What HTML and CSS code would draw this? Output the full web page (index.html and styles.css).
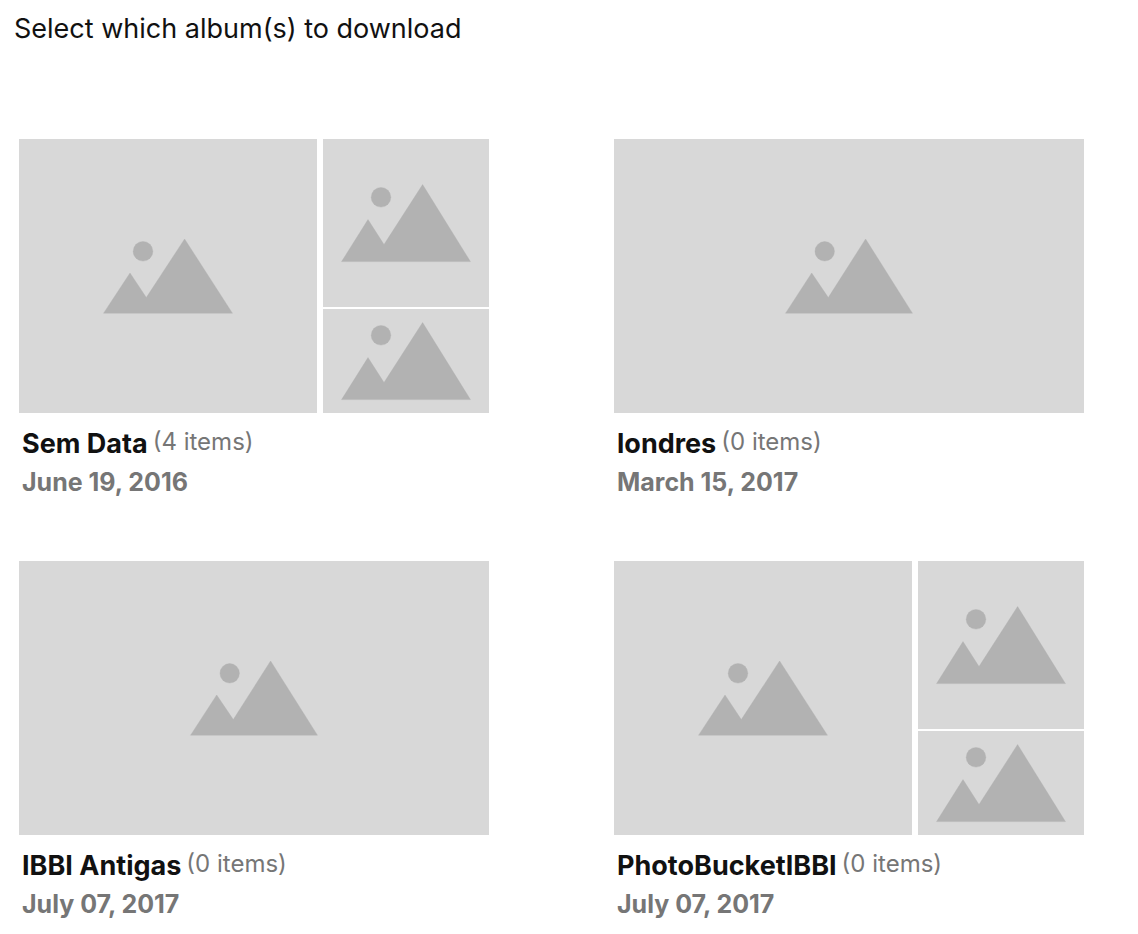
FILE: index.html
```html
<!DOCTYPE html>
<html lang="en">
<head>
  <meta charset="UTF-8">
  <meta name="viewport" content="width=device-width, initial-scale=1.0">
  <title>Download albums</title>
  <link rel="stylesheet" href="styles.css">
</head>
<body>
  <svg class="symbols" aria-hidden="true">
    <symbol id="photo" viewBox="0 0 130 80">
      <circle cx="40" cy="14.3" r="9.8"/>
      <path d="M0.6 78.6L27 36.6L43 61.6L81.6 1.6L129.4 78.6Z"/>
    </symbol>
    <symbol id="photo-large" viewBox="0 0 130 76">
      <circle cx="40" cy="13.3" r="9.8"/>
      <path d="M0.6 75.2L27 35L43.3 59.6L81.6 1L129.4 75.2Z"/>
    </symbol>
    <symbol id="photo-wide" viewBox="0 0 128 76">
      <circle cx="39.7" cy="13.3" r="9.7"/>
      <path d="M0.6 75.2L26.7 35L43.3 59.6L80.6 1L127.4 75.2Z"/>
    </symbol>
  </svg>

  <h1>Select which album(s) to download</h1>

  <main class="albums">
    <article class="album">
      <div class="cover split">
        <div class="thumb large"><svg><use href="#photo-large"/></svg></div>
        <div class="thumb"><svg><use href="#photo"/></svg></div>
        <div class="thumb"><svg><use href="#photo"/></svg></div>
      </div>
      <div class="caption">
        <h2>Sem Data</h2>
        <span>(4 items)</span>
      </div>
      <p>June 19, 2016</p>
    </article>

    <article class="album">
      <div class="cover">
        <div class="thumb large"><svg><use href="#photo-wide"/></svg></div>
      </div>
      <div class="caption">
        <h2>londres</h2>
        <span>(0 items)</span>
      </div>
      <p>March 15, 2017</p>
    </article>

    <article class="album">
      <div class="cover">
        <div class="thumb large"><svg><use href="#photo-wide"/></svg></div>
      </div>
      <div class="caption">
        <h2>IBBI Antigas</h2>
        <span>(0 items)</span>
      </div>
      <p>July 07, 2017</p>
    </article>

    <article class="album">
      <div class="cover split">
        <div class="thumb large"><svg><use href="#photo-large"/></svg></div>
        <div class="thumb"><svg><use href="#photo"/></svg></div>
        <div class="thumb"><svg><use href="#photo"/></svg></div>
      </div>
      <div class="caption">
        <h2>PhotoBucketIBBI</h2>
        <span>(0 items)</span>
      </div>
      <p>July 07, 2017</p>
    </article>
  </main>
</body>
</html>
```
FILE: styles.css
```css
body {
  margin: 0;
  padding: 13px 54px 12px 14px;
  background-color: #fff;
  color: #111;
  font-family: Inter, sans-serif;
}
h1 {
  margin: 0;
  font-size: 27px;
  line-height: 32px;
  font-weight: 400;
}
.symbols {
  display: none;
}
/* Album grid */
.albums {
  display: grid;
  grid-template-columns: 1fr 1fr;
  column-gap: 125px;
  row-gap: 61px;
  margin: 94px 0 0 5px;
}
/* Cover thumbnails */
.cover {
  display: grid;
  grid-template-rows: 168px 104px;
  gap: 2px 6px;
}
.split {
  grid-template-columns: 298fr 166fr;
}
.thumb {
  display: flex;
  align-items: center;
  justify-content: center;
  background-color: #d8d8d8;
}
.large {
  grid-row: span 2;
}
.thumb svg {
  width: 130px;
  height: 80px;
  fill: #b2b2b2;
  stroke: #b2b2b2;
  stroke-opacity: 0.4;
}
.large svg {
  height: 76px;
}
/* Captions */
.caption {
  display: flex;
  align-items: flex-start;
  gap: 5px;
  margin: 10px 0 0 3px;
}
.caption h2 {
  margin: 0;
  font-size: 27px;
  line-height: 41px;
  font-weight: 650;
}
.caption span {
  color: #767676;
  font-size: 24px;
  line-height: 38px;
}
.album p {
  margin: 0 0 0 3px;
  color: #767676;
  font-size: 25px;
  line-height: 36px;
  font-weight: 700;
}
```
